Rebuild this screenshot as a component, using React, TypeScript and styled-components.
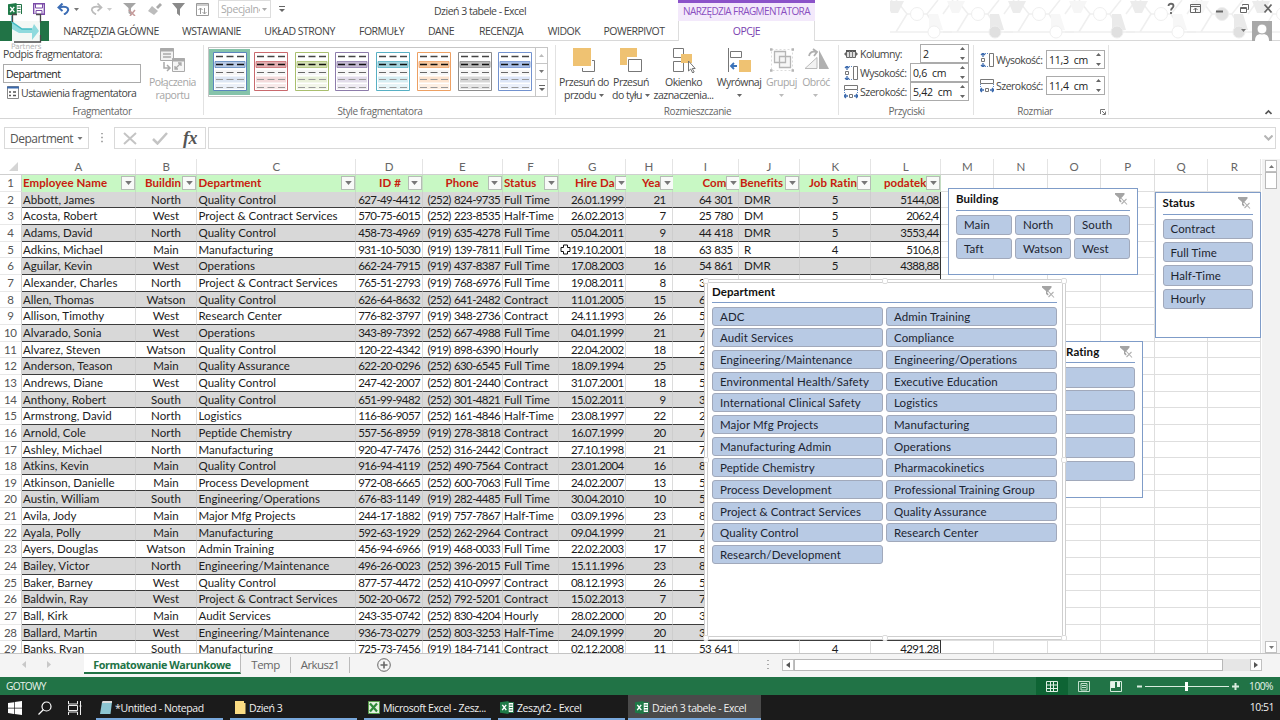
import type { ReactNode } from 'react'
import styled, { createGlobalStyle } from 'styled-components'

const GlobalStyle = createGlobalStyle`
  * {
    box-sizing: border-box;
  }

  body {
    margin: 0;
    overflow: hidden;
    background: #fff;
    color: #444;
    font: 10.5px 'Open Sans', 'Noto Sans', sans-serif;
    letter-spacing: -0.5px;
    white-space: nowrap;
  }

  svg {
    display: block;
    flex: none;
  }
`

const SHEET_FONT = "'Lato', 'Open Sans', sans-serif"

/* ---------- data ---------- */

const columns = [
  { id: 'A', width: 114.5, align: 'left', pad: 1.5 },
  { id: 'B', width: 61, align: 'center', pad: 0 },
  { id: 'C', width: 159, align: 'left', pad: 1.5 },
  { id: 'D', width: 66.5, align: 'right', pad: 1.5 },
  { id: 'E', width: 80, align: 'right', pad: 1.5 },
  { id: 'F', width: 56.5, align: 'left', pad: 1.5 },
  { id: 'G', width: 67, align: 'right', pad: 1.5 },
  { id: 'H', width: 46.5, align: 'right', pad: 6 },
  { id: 'I', width: 66, align: 'right', pad: 5 },
  { id: 'J', width: 61.5, align: 'left', pad: 5.5 },
  { id: 'K', width: 71, align: 'center', pad: 0 },
  { id: 'L', width: 70, align: 'right', pad: 1.5 },
  { id: 'M', width: 53.4, align: 'left', pad: 0 },
  { id: 'N', width: 53.4, align: 'left', pad: 0 },
  { id: 'O', width: 53.4, align: 'left', pad: 0 },
  { id: 'P', width: 53.4, align: 'left', pad: 0 },
  { id: 'Q', width: 53.4, align: 'left', pad: 0 },
  { id: 'R', width: 53.4, align: 'left', pad: 0 },
]

const headers = [
  { text: 'Employee Name', pad: 1.5 },
  { text: 'Buildin', pad: 9 },
  { text: 'Department', pad: 1.5 },
  { text: 'ID #', pad: 23 },
  { text: 'Phone', pad: 23 },
  { text: 'Status', pad: 1.5 },
  { text: 'Hire Da', pad: 16 },
  { text: 'Yea', pad: 16 },
  { text: 'Com', pad: 30 },
  { text: 'Benefits', pad: 1.5 },
  { text: 'Job Ratin', pad: 9 },
  { text: 'podatek', pad: 13 },
]

const employees = `Abbott, James|North|Quality Control|627-49-4412|(252) 824-9735|Full Time|26.01.1999|21|64 301|DMR|5|5144,08
Acosta, Robert|West|Project & Contract Services|570-75-6015|(252) 223-8535|Half-Time|26.02.2013|7|25 780|DM|5|2062,4
Adams, David|North|Quality Control|458-73-4969|(919) 635-4278|Full Time|05.04.2011|9|44 418|DMR|5|3553,44
Adkins, Michael|Main|Manufacturing|931-10-5030|(919) 139-7811|Full Time|19.10.2001|18|63 835|R|4|5106,8
Aguilar, Kevin|West|Operations|662-24-7915|(919) 437-8387|Full Time|17.08.2003|16|54 861|DMR|5|4388,88
Alexander, Charles|North|Project & Contract Services|765-51-2793|(919) 768-6976|Full Time|19.08.2011|8|37 612
Allen, Thomas|Watson|Quality Control|626-64-8632|(252) 641-2482|Contract|11.01.2005|15|63 206
Allison, Timothy|West|Research Center|776-82-3797|(919) 348-2736|Contract|24.11.1993|26|52 710
Alvarado, Sonia|West|Operations|343-89-7392|(252) 667-4988|Full Time|04.01.1999|21|72 480
Alvarez, Steven|Watson|Quality Control|120-22-4342|(919) 898-6390|Hourly|22.04.2002|18|22 316
Anderson, Teason|Main|Quality Assurance|622-20-0296|(252) 630-6545|Full Time|18.09.1994|25|57 110
Andrews, Diane|West|Quality Control|247-42-2007|(252) 801-2440|Contract|31.07.2001|18|54 230
Anthony, Robert|South|Quality Control|651-99-9482|(252) 301-4821|Full Time|15.02.2011|9|38 940
Armstrong, David|North|Logistics|116-86-9057|(252) 161-4846|Half-Time|23.08.1997|22|24 815
Arnold, Cole|North|Peptide Chemistry|557-56-8959|(919) 278-3818|Contract|16.07.1999|20|71 190
Ashley, Michael|North|Manufacturing|920-47-7476|(252) 316-2442|Contract|27.10.1998|21|73 072
Atkins, Kevin|Main|Quality Control|916-94-4119|(252) 490-7564|Contract|23.01.2004|16|82 500
Atkinson, Danielle|Main|Process Development|972-08-6665|(252) 600-7063|Full Time|24.02.2007|13|53 310
Austin, William|South|Engineering/Operations|676-83-1149|(919) 282-4485|Full Time|30.04.2010|10|52 940
Avila, Jody|Main|Major Mfg Projects|244-17-1882|(919) 757-7867|Half-Time|03.09.1996|23|86 240
Ayala, Polly|Main|Manufacturing|592-63-1929|(252) 262-2964|Contract|09.04.1999|21|71 680
Ayers, Douglas|Watson|Admin Training|456-94-6966|(919) 468-0033|Full Time|22.02.2003|17|85 130
Bailey, Victor|North|Engineering/Maintenance|496-26-0023|(252) 396-2015|Full Time|15.11.1996|23|82 760
Baker, Barney|West|Quality Control|877-57-4472|(252) 410-0997|Contract|08.12.1993|26|52 490
Baldwin, Ray|West|Project & Contract Services|502-20-0672|(252) 792-5201|Contract|15.02.2013|7|74 530
Ball, Kirk|Main|Audit Services|243-35-0742|(252) 830-4204|Hourly|28.02.2000|20|35 320
Ballard, Martin|West|Engineering/Maintenance|936-73-0279|(252) 803-3253|Half-Time|24.09.1999|20|39 610
Banks, Ryan|South|Manufacturing|725-73-7456|(919) 184-7141|Contract|02.12.2008|11|53 641||4|4291,28`
  .split('\n')
  .map((line) => line.split('|'))

const departments = [
  'ADC',
  'Admin Training',
  'Audit Services',
  'Compliance',
  'Engineering/Maintenance',
  'Engineering/Operations',
  'Environmental Health/Safety',
  'Executive Education',
  'International Clinical Safety',
  'Logistics',
  'Major Mfg Projects',
  'Manufacturing',
  'Manufacturing Admin',
  'Operations',
  'Peptide Chemistry',
  'Pharmacokinetics',
  'Process Development',
  'Professional Training Group',
  'Project & Contract Services',
  'Quality Assurance',
  'Quality Control',
  'Research Center',
  'Research/Development',
]

const galleryColors = [
  ['#5b86bd', '#b9cbe6', '#dde6f3'],
  ['#c9696d', '#e3aeb1', '#f3dadb'],
  ['#a9bf6e', '#d5e0b5', '#e9f0da'],
  ['#8d7cab', '#c4b9d3', '#e2dcea'],
  ['#57b0c4', '#a5d4de', '#d6edf2'],
  ['#eda063', '#f7c9a0', '#fce4d0'],
  ['#8c8c8c', '#bdbdbd', '#d6d6d6'],
  ['#7292cf', '#a9c0ea', '#dce5f7'],
]

/* ---------- window chrome ---------- */

const Window = styled.div`
  width: 1280px;
  height: 720px;
  display: flex;
  flex-direction: column;
  overflow: hidden;
`

const TopArea = styled.header`
  height: 41px;
  position: relative;
  flex: none;
`

const Backdrop = styled.svg`
  position: absolute;
  right: 0;
  top: 0;
`

const TitleBar = styled.div`
  height: 21px;
  display: flex;
  align-items: center;
  position: relative;
`

const QuickAccess = styled.div`
  width: 400px;
  height: 18px;
  padding-left: 8px;
  align-self: flex-start;
  display: flex;
  align-items: center;
`

const Slot = styled.div<{ $w: number }>`
  width: ${({ $w }) => $w}px;
  flex: none;
`

const StyleCombo = styled.div`
  width: 53px;
  height: 18px;
  padding: 0 3px 0 2px;
  border: 1px solid #ddd;
  display: flex;
  align-items: center;
  justify-content: space-between;
  color: #aaa;
  letter-spacing: -0.4px;
`

const ComboText = styled.span`
  width: 39px;
  overflow: hidden;
`

const Title = styled.div`
  width: 278px;
  padding-left: 34px;
  color: #444;
`

const ContextTitle = styled.div`
  width: 137px;
  height: 21px;
  border-top: 3px solid #8b52c9;
  background: #f3e9fb;
  color: #8a4fc0;
  font-size: 10px;
  line-height: 16px;
  text-align: center;
  letter-spacing: -0.6px;
`

const WindowButtons = styled.div`
  margin-left: auto;
  padding: 0 7px 3px 0;
  display: flex;
  align-items: center;
`

const TabRow = styled.nav`
  height: 20px;
  display: flex;
  position: relative;
  border-bottom: 1px solid #d8d8d8;
`

const FileTab = styled.div`
  width: 49px;
  height: 20px;
  background: #217346;
`

const Tab = styled.div<{ $w: number }>`
  width: ${({ $w }) => $w}px;
  line-height: 20px;
  text-align: center;
  letter-spacing: -0.5px;
`

const ActiveTab = styled(Tab)`
  height: 20px;
  background: #fff;
  border: 1px solid #ddd;
  border-width: 0 1px;
  color: #7a3fb0;
`

const Account = styled.div`
  margin-left: auto;
  padding-right: 8px;
  display: flex;
  align-items: center;
  gap: 6px;
`

const Watermark = styled.div`
  position: absolute;
  left: 11px;
  top: 13px;
  z-index: 3;
  color: #b4b4b4;
  font: 7.5px/8px 'DejaVu Sans', sans-serif;
  letter-spacing: -0.1px;
`

/* ---------- ribbon ---------- */

const Ribbon = styled.section`
  height: 78px;
  flex: none;
  display: flex;
  border-bottom: 1px solid #d5d5d5;
`

const Group = styled.div<{ $w: number }>`
  width: ${({ $w }) => $w}px;
  height: 77px;
  padding-top: 6px;
  position: relative;
  display: flex;
  flex-direction: column;
  background: linear-gradient(#e2e2e2, #e2e2e2) right 4px / 1px 70px no-repeat;
`

const GroupBody = styled.div<{ $pad?: string }>`
  height: 58px;
  display: flex;
  padding: ${({ $pad = '0' }) => $pad};
`

const GroupLabel = styled.div<{ $shift?: number }>`
  height: 14px;
  padding: 1px ${({ $shift = 0 }) => $shift}px 0 0;
  display: flex;
  align-items: center;
  justify-content: center;
  color: #666;
  font-size: 10px;
  line-height: 13px;
  letter-spacing: -0.4px;
`

const Launcher = styled.svg`
  position: absolute;
  right: 3px;
  bottom: 3px;
`

const CaptionColumn = styled.div`
  width: 142px;
  padding-left: 3px;
  display: flex;
  flex-direction: column;
  letter-spacing: -0.52px;
`

const CaptionLabel = styled.div`
  height: 17px;
  line-height: 15px;
`

const Field = styled.div<{ $w: number }>`
  width: ${({ $w }) => $w}px;
  height: 19px;
  padding: 0 3px 0 2px;
  border: 1px solid #ababab;
  background: #fff;
  color: #222;
  display: flex;
  align-items: center;
  justify-content: space-between;
`

const SettingsLink = styled.div`
  height: 19px;
  padding-left: 4px;
  display: flex;
  align-items: center;
  gap: 2px;
`

const BigButton = styled.div<{ $w: number; $muted?: boolean }>`
  width: ${({ $w }) => $w}px;
  margin-top: 1px;
  display: flex;
  flex-direction: column;
  align-items: center;
  text-align: center;
  color: ${({ $muted }) => ($muted ? '#a6a6a6' : '#444')};
`

const BigIcon = styled.div`
  height: 25px;
`

const BigLabel = styled.div`
  margin-top: 2px;
`

const LabelLine = styled.div`
  height: 13.5px;
  display: flex;
  align-items: center;
  justify-content: center;
  gap: 3px;
`

const Gallery = styled.div`
  width: 340px;
  height: 50px;
  border: 1px solid #c6c6c6;
  display: flex;
`

const GalleryItem = styled.div<{ $selected: boolean }>`
  width: 41px;
  height: 46px;
  margin-top: 1px;
  padding: 3px 0 0 4px;
  background: ${({ $selected }) => ($selected ? '#85c3aa' : 'transparent')};
`

const GalleryScroll = styled.div`
  width: 12px;
  margin-left: auto;
  display: grid;
  grid-template-rows: repeat(3, 1fr);
  border-left: 1px solid #c6c6c6;
`

const ScrollCell = styled.div`
  display: grid;
  place-items: center;
  border-bottom: 1px solid #c6c6c6;

  &:last-child {
    border: 0;
  }
`

const FieldStack = styled.div<{ $gap: number }>`
  flex: 1;
  margin-top: -3px;
  display: flex;
  flex-direction: column;
  gap: ${({ $gap }) => $gap}px;
`

const FieldRow = styled.div`
  height: 19px;
  display: flex;
  align-items: center;
  gap: 2px;

  ${Field} {
    margin-left: auto;
    letter-spacing: -0.25px;
    word-spacing: 2.5px;
  }
`

/* ---------- formula bar ---------- */

const FormulaBar = styled.section`
  height: 40px;
  flex: none;
  padding: 8px 4px 0;
  display: flex;
  background: #fff;
`

const NameBox = styled.div`
  width: 85px;
  height: 22px;
  padding: 0 5px;
  border: 1px solid #d9d9d9;
  display: flex;
  align-items: center;
  justify-content: space-between;
  font-size: 12px;
  letter-spacing: -0.5px;
  color: #555;
`

const FormulaButtons = styled.div`
  width: 92px;
  height: 22px;
  margin-left: 25px;
  padding: 0 8px;
  border: 1px solid #d9d9d9;
  display: flex;
  align-items: center;
  justify-content: space-between;
`

const Fx = styled.span`
  color: #555;
  font: italic bold 18px/18px 'Liberation Serif', serif;
  letter-spacing: -0.5px;
`

const FormulaInput = styled.div`
  flex: 1;
  height: 22px;
  margin-left: 2px;
  padding-right: 2px;
  border: 1px solid #d9d9d9;
  display: flex;
  align-items: center;
  justify-content: flex-end;
`

const Dots = styled.div`
  width: 25px;
  margin-right: -25px;
  height: 22px;
  display: grid;
  place-items: center;
`

/* ---------- sheet ---------- */

const SheetArea = styled.main`
  height: 495px;
  flex: none;
  display: flex;
  position: relative;
  overflow: hidden;
  border-bottom: 1px solid #c4c4c4;
`

const Grid = styled.div`
  width: 1262px;
  height: 494px;
  overflow: hidden;
  font-family: ${SHEET_FONT};
`

const HeadRow = styled.div`
  height: 16px;
  display: flex;
  border-bottom: 1px solid #cfcfcf;
`

const Corner = styled.div`
  width: 21.5px;
  height: 15px;
  padding: 3px 0 0 9px;
  flex: none;
`

const ColumnHead = styled.div<{ $w: number }>`
  width: ${({ $w }) => $w}px;
  flex: none;
  border-right: 1px solid #e4e4e4;
  text-align: center;
  font: 11.5px/15px ${SHEET_FONT};
  color: #666;
`

const Row = styled.div`
  height: 16.67px;
  display: flex;
`

const RowHead = styled.div`
  width: 21.5px;
  flex: none;
  border-right: 1px solid #d0d0d0;
  border-bottom: 1px solid #e8e8e8;
  text-align: center;
  font-size: 11.5px;
  line-height: 16.4px;
  color: #555;
`

const Cell = styled.div<{
  $w: number
  $align: string
  $pad: number
  $shaded: boolean
  $last: boolean
  $digits: boolean
}>`
  width: ${({ $w }) => $w}px;
  padding: 0 ${({ $pad }) => $pad}px;
  flex: none;
  border-right: 1px solid
    ${({ $shaded, $last }) => ($last ? '#333' : $shaded ? '#cdcdcd' : '#dcdcdc')};
  border-bottom: 1px solid #3c3c3c;
  background: ${({ $shaded }) => ($shaded ? '#d8d8d8' : '#fff')};
  color: #1c1c1c;
  text-align: ${({ $align }) => $align};
  font-size: 11.5px;
  line-height: 16.4px;
  letter-spacing: ${({ $digits }) => ($digits ? -0.62 : 0.03)}px;
  word-spacing: ${({ $digits }) => ($digits ? 1 : 0)}px;
`

const EmptyCell = styled.div<{ $w: number }>`
  width: ${({ $w }) => $w}px;
  flex: none;
  border: 1px solid #dedede;
  border-width: 0 1px 1px 0;
`

const HeaderCell = styled.div<{ $w: number; $pad: number }>`
  width: ${({ $w }) => $w}px;
  padding-left: ${({ $pad }) => $pad}px;
  flex: none;
  display: flex;
  align-items: center;
  justify-content: space-between;
  border-right: 1px solid #c4dcc2;
  background: #c8f8c4;
  color: #c8200f;
  font-weight: 700;
  font-size: 11.5px;
  line-height: 16px;
  letter-spacing: 0.07px;
`

const FilterButton = styled.div`
  width: 14px;
  height: 14px;
  flex: none;
  display: grid;
  place-items: center;
  border: 1px solid #b5bdb5;
  background: #f8faf8;
`

const SideScroll = styled.div`
  flex: 1;
  display: flex;
  flex-direction: column;
  align-items: center;
  background: #f2f2f2;
  padding-top: 1px;
`

const ScrollButton = styled.div`
  width: 12px;
  height: 12px;
  flex: none;
  display: grid;
  place-items: center;
  border: 1px solid #c0c0c0;
  background: #fff;
`

const SideThumb = styled.div`
  width: 12px;
  height: 17px;
  margin-bottom: auto;
  border: 1px solid #b8b8b8;
  background: #fff;
`

/* floating slicer panels sit freely over the sheet */
const Slicer = styled.div<{ $x: number; $y: number; $w: number; $h: number; $selected?: boolean }>`
  position: absolute;
  left: ${({ $x }) => $x}px;
  top: ${({ $y }) => $y}px;
  width: ${({ $w }) => $w}px;
  height: ${({ $h }) => $h}px;
  padding: ${({ $selected }) => ($selected ? '0 5px 0 4px' : '0 7px')};
  background: #fff;
  border: ${({ $selected }) => ($selected ? '4px double #cfcfcf' : '1px solid #7f9cc8')};
  border-radius: ${({ $selected }) => ($selected ? 3 : 0)}px;
  font-family: ${SHEET_FONT};
`

const SlicerTitle = styled.div<{ $h: number }>`
  height: ${({ $h }) => $h}px;
  padding: 0 2px 1px 0;
  display: flex;
  align-items: center;
  justify-content: space-between;
  border-bottom: 1px solid #7f9cc8;
  color: #111;
  font-size: 11.5px;
  font-weight: 700;
  letter-spacing: 0.08px;
`

const SlicerItems = styled.div<{ $cols: number; $h: number; $pitch: number }>`
  margin-top: 4px;
  display: grid;
  grid-template-columns: repeat(${({ $cols }) => $cols}, 1fr);
  grid-auto-rows: ${({ $h }) => $h}px;
  gap: ${({ $pitch, $h }) => $pitch - $h}px 3px;
`

const SlicerItem = styled.div`
  padding-left: 7px;
  display: flex;
  align-items: center;
  border: 1px solid #a1a9bb;
  border-radius: 3px;
  background: #b8cae4;
  color: #1c2430;
  font-size: 11.5px;
  letter-spacing: 0.1px;
`

const Handle = styled.i<{ $x: number; $y: number }>`
  position: absolute;
  left: ${({ $x }) => $x}px;
  top: ${({ $y }) => $y}px;
  width: 6px;
  height: 6px;
  border: 1px solid #dcdcdc;
  border-radius: 2px;
  background: #fff;
`

const Cursor = styled.svg`
  position: absolute;
  left: 560px;
  top: 85px;
`

/* ---------- bottom bars ---------- */

const SheetTabs = styled.div`
  height: 23px;
  flex: none;
  padding-right: 18px;
  display: flex;
  background: #f4f4f4;
  color: #666;
`

const TabArrows = styled.div`
  width: 84px;
  padding: 7px 0 0 22px;
  display: flex;
  gap: 19px;
`

const SheetTab = styled.div<{ $w: number; $active?: boolean }>`
  width: ${({ $w }) => $w}px;
  height: ${({ $active }) => ($active ? 20 : 16)}px;
  margin-top: ${({ $active }) => ($active ? 0 : 3)}px;
  text-align: center;
  line-height: ${({ $active }) => ($active ? 21 : 15)}px;
  letter-spacing: ${({ $active }) => ($active ? -0.4 : -0.55)}px;
  background: ${({ $active }) => ($active ? '#fff' : 'none')};
  color: ${({ $active }) => ($active ? '#217346' : '#666')};
  font-weight: ${({ $active }) => ($active ? 700 : 400)};
  font-size: ${({ $active }) => ($active ? 10.8 : 11.5)}px;
  border: 0 solid #bbb;
  border-right-width: 1px;
  ${({ $active }) => $active && 'border-bottom: 2px solid #217346;'}
`

const AddTab = styled.div`
  padding: 4px 0 0 27px;
`

const SplitHandle = styled.div`
  width: 6px;
  margin-left: auto;
  padding: 6px 0 0 2px;
`

const HScroll = styled.div`
  width: 480px;
  height: 12px;
  margin: 5px 0 0 11px;
  display: flex;
  background: #e6e6e6;
`

const HThumb = styled.div`
  width: 429px;
  border: 1px solid #b8b8b8;
  background: #fff;
`

const StatusBar = styled.footer`
  height: 18px;
  flex: none;
  padding: 0 7px 0 6px;
  display: flex;
  align-items: center;
  justify-content: space-between;
  background: #217346;
  color: #e8f3ec;
  font-size: 10.2px;
  letter-spacing: -0.7px;
`

const ViewTools = styled.div`
  height: 18px;
  display: flex;
  align-items: center;
`

const ViewButton = styled.div<{ $active?: boolean }>`
  width: 32px;
  height: 18px;
  display: grid;
  place-items: center;
  background: ${({ $active }) => ($active ? '#0e6434' : 'none')};
`

const Zoom = styled.div`
  width: 33px;
  text-align: right;
  letter-spacing: -0.5px;
`

const TaskBar = styled.div`
  height: 25px;
  flex: none;
  display: flex;
  background: #1b1b1b;
  color: #f0f0f0;
`

const SystemButtons = styled.div`
  width: 96px;
  padding: 0 14px 0 8px;
  display: flex;
  align-items: center;
  justify-content: space-between;
`

const Task = styled.div<{ $w: number; $pad?: number; $active?: boolean }>`
  width: ${({ $w }) => $w}px;
  height: 25px;
  margin-right: 7px;
  padding: 2px 0 0 ${({ $pad = 4 }) => $pad}px;
  display: flex;
  align-items: center;
  gap: 3px;
  letter-spacing: -0.4px;
  border-bottom: 2px solid #78a8dc;
  background: ${({ $active }) => ($active ? '#4a4a4a' : 'none')};

  &:nth-last-child(3) {
    margin-right: 3px;
  }
`

const Clock = styled.div`
  margin-left: auto;
  padding-right: 6px;
  line-height: 25px;
`

/* ---------- icons ---------- */

const Caret = ({ color = '#777', size = 5 }: { color?: string; size?: number }) => (
  <svg width={size} height={size > 6 ? 4 : 3} viewBox="0 0 5 3">
    <path d="M0 0h5L2.5 3z" fill={color} />
  </svg>
)

const Spinner = () => (
  <svg width="5" height="13" viewBox="0 0 5 13" fill="#666">
    <path d="M0 3h5L2.500 0zM0 10h5l-2.500 3z" />
  </svg>
)

const ExcelIcon = () => (
  <svg width="14" height="13" viewBox="0 0 14 13">
    <path d="M8 1.500h5.500v10H8z" fill="#fff" stroke="#217346" />
    <path d="M9.500 4h3M9.500 6.500h3M9.500 9h3" stroke="#217346" strokeWidth="1.200" />
    <path d="M0 1.300L8.500 0v13L0 11.700z" fill="#1e7a47" />
    <path d="M2.300 3.800l4 5.400M6.200 3.800l-4 5.400" stroke="#fff" strokeWidth="1.400" />
  </svg>
)

const ClearFilter = () => (
  <svg width="13" height="13" viewBox="0 0 13 13">
    <path d="M0 1h9.500v1.500L6.500 6v5L4 9V6L0 2.500z" fill="#a4a4a4" />
    <path d="M6 6.500l6 6M11.500 7l-5 5" stroke="#fff" strokeWidth="2.600" />
    <path d="M6 6l6 6.500M11.500 7l-5 5" stroke="#b0b0b0" strokeWidth="1.100" />
  </svg>
)

const FunnelIcon = () => (
  <svg width="13" height="13" viewBox="0 0 13 13">
    <path d="M0 0h13L8 6v7L5 10.500V6z" fill="#8a8a8a" />
  </svg>
)

const StylePreview = ({ colors }: { colors: string[] }) => {
  const [line, strong, soft] = colors
  return (
    <svg width="34" height="39" viewBox="0 0 34 39">
      <path d="M.5.5h33v38H.5z" fill="#fff" stroke={line} />
      <path d="M2 9.500h30v6H2z" fill={strong} stroke={line} strokeWidth=".8" />
      <path d="M2 18h30v5H2z" fill="#f6f6f6" />
      <path d="M2 24.500h30v6H2z" fill={soft} />
      <path d="M2 32h30v5H2z" fill={soft} opacity=".6" />
      <path d="M3 4.500h28" stroke="#444" strokeWidth="1.300" strokeDasharray="7 3.500" />
      <path d="M3 12.500h28" stroke="#111" strokeWidth="1.500" strokeDasharray="7 3.500" />
      <path d="M3 20.500h28" stroke="#666" strokeDasharray="7 3.500" />
      <path d="M3 27.500h28M3 35.500h28" stroke="#999" strokeDasharray="7 3.500" />
    </svg>
  )
}

const HeightIcon = () => (
  <svg width="14" height="14" viewBox="0 0 14 14" fill="none">
    <path d="M3 0v4M1 2l2-2 2 2M3 14v-4M1 12l2 2 2-2" stroke="#3a69ad" strokeWidth="1.300" />
    <path d="M1.500 5.500h3v3h-3z" stroke="#777" />
    <path d="M5 .5h4M5 13.500h4" stroke="#5a86c4" strokeDasharray="1 1" />
    <path d="M9.500.5h4v13h-4z" stroke="#777" fill="#fff" />
  </svg>
)

const WidthIcon = () => (
  <svg width="14" height="14" viewBox="0 0 14 14" fill="none">
    <path d="M.5.5h13v4H.5z" stroke="#777" fill="#fff" />
    <path d="M.5 5v4M13.500 5v4" stroke="#5a86c4" strokeDasharray="1 1" />
    <path d="M0 11h4M2 9l-2 2 2 2M14 11h-4M12 9l2 2-2 2" stroke="#3a69ad" strokeWidth="1.300" />
    <path d="M5.500 9.500h3v3h-3z" stroke="#777" />
  </svg>
)

const ColumnsIcon = () => (
  <svg width="14" height="10" viewBox="0 0 14 10" fill="none">
    <path d="M2.500 1.500h9v7h-9z" stroke="#666" fill="#ddd" />
    <path d="M2 2h10" stroke="#555" strokeWidth="2" />
    <path d="M5.500 2v7M8.500 2v7" stroke="#777" />
    <path d="M2 3L0 5l2 2zM12 3l2 2-2 2z" fill="#666" />
  </svg>
)

const ForwardIcon = () => (
  <svg width="24" height="24" viewBox="0 0 24 24">
    <path d="M10.500 12.500h12v11h-12z" fill="#fff" stroke="#777" />
    <path d="M0 0h20v20H0z" fill="#fff" />
    <path d="M1 0h18v18H1z" fill="#efc272" />
  </svg>
)

const BackwardIcon = () => (
  <svg width="24" height="24" viewBox="0 0 24 24">
    <path d="M1 0h17v17H1z" fill="#efc272" />
    <path d="M8 9h15v15H8z" fill="#fff" />
    <path d="M9.500 11.500h13v12h-13z" fill="#fff" stroke="#777" />
  </svg>
)

const PaneIcon = () => (
  <svg width="24" height="25" viewBox="0 0 24 25">
    <path d="M1.500.5h10v9h-10zM1.500 13.500h10v10h-10z" fill="#fff" stroke="#777" />
    <path d="M9 6h11v9H9z" fill="#efc272" />
    <path d="M16.500 13v10l2.200-2 2 4 1.500-1-2-3.500h3z" fill="#fff" stroke="#666" strokeWidth=".9" />
  </svg>
)

const AlignIcon = () => (
  <svg width="24" height="24" viewBox="0 0 24 24">
    <path d="M1.500 0v24" stroke="#777" />
    <path d="M3.500 3.500h11v6h-11z" fill="#fff" stroke="#777" />
    <path d="M12 12h12v12H12z" fill="#efc272" />
    <path d="M10 18H4M7 15l-3 3 3 3" fill="none" stroke="#3a72b8" strokeWidth="1.800" />
  </svg>
)

const GroupIcon = () => (
  <svg width="24" height="24" viewBox="0 0 24 24" fill="none" stroke="#b5b5b5">
    <path d="M1.500 1.500h21v21h-21z" strokeDasharray="2 2" stroke="#dcdcdc" />
    <path d="M4.500 3.500h11v11h-11zM9.500 8.500h11v11h-11z" fill="#eee" fillOpacity=".5" strokeWidth="1.300" />
    <path d="M0 1.500h2.500M21.500 1.500H24M0 22.500h2.500M21.500 22.500H24" strokeWidth="2.500" />
  </svg>
)

const RotateIcon = () => (
  <svg width="25" height="22" viewBox="0 0 25 22">
    <path d="M1 20.500h12v-11z" fill="#f3f3f3" stroke="#bbb" />
    <path d="M15 2v19h10z" fill="#b0b0b0" />
    <path d="M5 8c1-4 3-5 7-4M9 1l4 3-3 4" fill="none" stroke="#b0b0b0" strokeWidth="1.800" />
  </svg>
)

const ReportIcon = () => (
  <svg width="25" height="25" viewBox="0 0 25 25" fill="none" stroke="#aaa">
    <path d="M.5.5h13v12H.5z" fill="#f2f2f2" />
    <path d="M0 2h14" strokeWidth="3" />
    <path d="M3 6h8M3 9h8" strokeWidth="1.500" />
    <path d="M12.500 10.500h12v13h-12z" fill="#f6f6f6" />
    <path d="M12 12h13" strokeWidth="3" />
    <path d="M15 21l6-6M18 15h3v3M15 18v3h3" strokeWidth="1.300" />
    <path d="M4 14v6h6M7 17l3 3-3 3" strokeWidth="1.500" />
  </svg>
)

const Hexes = () => (
  <Backdrop width="390" height="40" viewBox="0 0 390 40" fill="none" stroke="#efefef">
    {[0, 1, 2, 3, 4, 5, 6].map((i) => (
      <g key={i} transform={`translate(${i * 61 - 8} 0)`}>
        <path d="M0 14L10 0M14 0l11 14h20l11-14M25 14L14 32H0M45 14l11 18h14M14 32h42" strokeWidth="1.500" />
        <path d="M47 14h9l5 16-14 1z" fill={i % 2 ? '#eaeaea' : '#f7f7f7'} stroke="none" />
        <path d="M4 1h18l-6 12H9z" fill={i % 2 ? '#f6f6f6' : '#ececec'} stroke="none" />
        <circle cx="35" cy="14" r="6.500" fill={i === 5 ? '#e2e2e2' : '#fff'} />
        <circle cx="52" cy="32" r="6" fill={i % 2 ? '#e0e0e0' : '#fff'} />
      </g>
    ))}
  </Backdrop>
)

const WindowIcons = () => (
  <svg width="106" height="14" viewBox="0 0 106 14" fill="none" stroke="#666">
    <path d="M1.500 4c0-3 5-3 5 0 0 2-2.500 2-2.500 4.500M4 10v2" strokeWidth="1.800" />
    <path d="M23.500 2.500h10v8h-10zM23.500 4.500h10M28.500 10V6M26.500 8l2-2 2 2" />
    <path d="M49 9.500h7" strokeWidth="2" />
    <path d="M75.500 3.500v-1h6v5h-1M73.500 5.500h6v5h-6zM73.500 6.500h6" />
    <path d="M97.500 2.500l7 8M104.500 2.500l-7 8" strokeWidth="1.800" />
  </svg>
)

/* ---------- pieces ---------- */

type BigProps = {
  w: number
  icon: ReactNode
  lines: string[]
  caret?: boolean
  muted?: boolean
}

const Big = ({ w, icon, lines, caret, muted }: BigProps) => (
  <BigButton $w={w} $muted={muted}>
    <BigIcon>{icon}</BigIcon>
    <BigLabel>
      {lines.map((line, i) => (
        <LabelLine key={line + i}>
          {line}
          {caret && i === lines.length - 1 && <Caret color={muted ? '#bbb' : '#666'} />}
        </LabelLine>
      ))}
    </BigLabel>
  </BigButton>
)

type PanelProps = {
  title: string
  x: number
  y: number
  w: number
  h: number
  cols: number
  itemHeight: number
  pitch: number
  items: string[]
  selected?: boolean
  children?: ReactNode
}

const SlicerPanel = ({ title, x, y, w, h, cols, itemHeight, pitch, items, selected, children }: PanelProps) => (
  <Slicer $x={x} $y={y} $w={w} $h={h} $selected={selected}>
    <SlicerTitle $h={selected ? 20 : 21.5}>
      {title}
      <ClearFilter />
    </SlicerTitle>
    <SlicerItems $cols={cols} $h={itemHeight} $pitch={pitch}>
      {items.map((item, i) => (
        <SlicerItem key={i}>{item}</SlicerItem>
      ))}
    </SlicerItems>
    {children}
  </Slicer>
)

const App = () => {
  return (
    <Window>
      <GlobalStyle />
      <TopArea>
        <Hexes />
        <TitleBar>
          <QuickAccess>
            <Slot $w={25}>
              <ExcelIcon />
            </Slot>
            <Slot $w={24}>
              <svg width="12" height="12" viewBox="0 0 12 12">
                <path d="M.7.7h10.600v10.600H.7z" fill="#fff" stroke="#7b4ba8" strokeWidth="1.400" />
                <path d="M2.500 1v4h7V1M3 11V7.500h6V11" fill="none" stroke="#7b4ba8" />
              </svg>
            </Slot>
            <Slot $w={17}>
              <svg width="13" height="12" viewBox="0 0 13 12" fill="none" stroke="#3c6db5" strokeWidth="2">
                <path d="M2 4.500c6-2 10 0 9 3-.5 2-2.500 3-4 4M5.500.5L1.500 4.500l4 3.500" />
              </svg>
            </Slot>
            <Slot $w={16}>
              <Caret />
            </Slot>
            <Slot $w={17}>
              <svg width="13" height="12" viewBox="0 0 13 12" fill="none" stroke="#bbb" strokeWidth="1.700">
                <path d="M11 4.500c-6-2-10 0-9 3 .5 2 2.500 3 4 4M7.500.5l4 4-4 3.500" />
              </svg>
            </Slot>
            <Slot $w={16}>
              <Caret color="#ccc" />
            </Slot>
            <Slot $w={25}>
              <svg width="14" height="13" viewBox="0 0 14 13">
                <path d="M0 0h13L8 5v7L5.500 10V5z" fill="#a5a5a5" />
                <path d="M6 7l6 6M12 7l-5 6" stroke="#c59a9a" strokeWidth="1.500" />
              </svg>
            </Slot>
            <Slot $w={24}>
              <svg width="14" height="12" viewBox="0 0 14 12">
                <path d="M8 4l4-4 2 2-4 4z" fill="#aaa" />
                <path d="M4 3l6 5-4 4-6-4z" fill="#bcbcbc" />
              </svg>
            </Slot>
            <Slot $w={24}>
              <FunnelIcon />
            </Slot>
            <Slot $w={22}>
              <svg width="13" height="13" viewBox="0 0 13 13" fill="none" stroke="#999">
                <path d="M.5.5h12v12H.5zM0 2h13M4.500 11V5M2.500 7l2-2 2 2M8.500 5v6M6.500 9l2 2 2-2" />
              </svg>
            </Slot>
            <StyleCombo>
              <ComboText>Specjaln‹</ComboText>
              <Caret color="#aaa" />
            </StyleCombo>
            <Slot $w={8} />
            <svg width="6" height="6" viewBox="0 0 6 6">
              <path d="M0 .5h6" stroke="#666" />
              <path d="M0 3h6L3 6z" fill="#666" />
            </svg>
          </QuickAccess>
          <Title>Dzień 3 tabele - Excel</Title>
          <ContextTitle>NARZĘDZIA FRAGMENTATORA</ContextTitle>
          <WindowButtons>
            <WindowIcons />
          </WindowButtons>
        </TitleBar>
        <TabRow>
          <FileTab />
          <Tab $w={124}>NARZĘDZIA GŁÓWNE</Tab>
          <Tab $w={77}>WSTAWIANIE</Tab>
          <Tab $w={99}>UKŁAD STRONY</Tab>
          <Tab $w={65}>FORMUŁY</Tab>
          <Tab $w={54}>DANE</Tab>
          <Tab $w={66}>RECENZJA</Tab>
          <Tab $w={60}>WIDOK</Tab>
          <Tab $w={80}>POWERPIVOT</Tab>
          <Slot $w={4} />
          <ActiveTab $w={137}>OPCJE</ActiveTab>
          <Account>
            <Caret />
            <svg width="20" height="20" viewBox="0 0 20 20">
              <path d="M0 0h20v20H0z" fill="#a8a8a8" />
              <path d="M3 20c0-6 3-7 7-7s7 1 7 7z" fill="#fff" />
              <circle cx="10" cy="8" r="5" fill="#fff" stroke="#a8a8a8" />
            </svg>
          </Account>
        </TabRow>
        <Watermark>
          <svg width="31" height="30" viewBox="0 0 31 30">
            <path d="M1 1h28v28H1z" fill="#fff" fillOpacity=".95" />
            <path d="M1 9v7l7 4h13v7l7-9-5-7-2 5H11z" fill="#8fdadd" />
            <path d="M1 3v6l10 7h10" fill="none" stroke="#45bcc4" strokeWidth="1.500" />
            <path d="M25 1.500h4.500v8M29.500 22v7H3M1.500 9V1.500H6" fill="none" stroke="#4a4a4a" strokeWidth="1.300" />
          </svg>
          Partners
        </Watermark>
      </TopArea>

      <Ribbon>
        <Group $w={204}>
          <GroupBody>
            <CaptionColumn>
              <CaptionLabel>Podpis fragmentatora:</CaptionLabel>
              <Field $w={138}>Department</Field>
              <SettingsLink>
                <svg width="12" height="13" viewBox="0 0 12 13" fill="none">
                  <path d="M.5.5h11v12H.5z" fill="#fff" stroke="#888" />
                  <path d="M0 1.500h12" stroke="#3a69ad" strokeWidth="2" />
                  <path d="M2 6h2M2 9.500h2M6 6h3M6 9.500h3" stroke="#555" strokeWidth="1.300" />
                </svg>
                Ustawienia fragmentatora
              </SettingsLink>
            </CaptionColumn>
            <Big w={61} icon={<ReportIcon />} lines={['Połączenia', 'raportu']} muted />
          </GroupBody>
          <GroupLabel>Fragmentator</GroupLabel>
        </Group>

        <Group $w={352}>
          <GroupBody $pad="0 0 0 4px">
            <Gallery>
              {galleryColors.map((colors, i) => (
                <GalleryItem key={i} $selected={i === 0}>
                  <StylePreview colors={colors} />
                </GalleryItem>
              ))}
              <GalleryScroll>
                <ScrollCell>
                  <svg width="5" height="3" viewBox="0 0 5 3">
                    <path d="M0 3h5L2.500 0z" fill="#bbb" />
                  </svg>
                </ScrollCell>
                <ScrollCell>
                  <Caret />
                </ScrollCell>
                <ScrollCell>
                  <svg width="6" height="6" viewBox="0 0 6 6">
                    <path d="M0 .5h6" stroke="#666" />
                    <path d="M0 3h6L3 6z" fill="#666" />
                  </svg>
                </ScrollCell>
              </GalleryScroll>
            </Gallery>
          </GroupBody>
          <GroupLabel>Style fragmentatora</GroupLabel>
        </Group>

        <Group $w={283}>
          <GroupBody $pad="0 0 0 2px">
            <Big w={52} icon={<ForwardIcon />} lines={['Przesuń do', 'przodu']} caret />
            <Big w={42} icon={<BackwardIcon />} lines={['Przesuń', 'do tyłu']} caret />
            <Big w={63} icon={<PaneIcon />} lines={['Okienko', 'zaznaczenia...']} />
            <Big w={48} icon={<AlignIcon />} lines={['Wyrównaj', '']} caret />
            <Big w={37} icon={<GroupIcon />} lines={['Grupuj', '']} caret muted />
            <Big w={32} icon={<RotateIcon />} lines={['Obróć', '']} caret muted />
          </GroupBody>
          <GroupLabel>Rozmieszczanie</GroupLabel>
        </Group>

        <Group $w={135}>
          <GroupBody $pad="0 5px 0 5px">
            <FieldStack $gap={0}>
              <FieldRow>
                <ColumnsIcon />
                Kolumny:
                <Field $w={49}>
                  2<Spinner />
                </Field>
              </FieldRow>
              <FieldRow>
                <HeightIcon />
                Wysokość:
                <Field $w={59}>
                  0,6 cm
                  <Spinner />
                </Field>
              </FieldRow>
              <FieldRow>
                <WidthIcon />
                Szerokość:
                <Field $w={59}>
                  5,42 cm
                  <Spinner />
                </Field>
              </FieldRow>
            </FieldStack>
          </GroupBody>
          <GroupLabel>Przyciski</GroupLabel>
        </Group>

        <Group $w={135}>
          <GroupBody $pad="6px 4px 0 6px">
            <FieldStack $gap={7}>
              <FieldRow>
                <HeightIcon />
                Wysokość:
                <Field $w={59}>
                  11,3 cm
                  <Spinner />
                </Field>
              </FieldRow>
              <FieldRow>
                <WidthIcon />
                Szerokość:
                <Field $w={59}>
                  11,4 cm
                  <Spinner />
                </Field>
              </FieldRow>
            </FieldStack>
          </GroupBody>
          <GroupLabel $shift={13}>Rozmiar</GroupLabel>
          <Launcher width="6" height="6" viewBox="0 0 6 6" fill="none" stroke="#777">
            <path d="M.5 5V.5H5M2 2l3 3M5.500 2.500v3h-3" />
          </Launcher>
        </Group>
        <Account>
          <svg width="7" height="72" viewBox="0 0 7 72" fill="none">
            <path d="M.5 70l3-3 3 3" stroke="#555" strokeWidth="1.700" />
          </svg>
        </Account>
      </Ribbon>

      <FormulaBar>
        <NameBox>
          Department
          <Caret size={6} />
        </NameBox>
        <Dots>
          <svg width="2" height="10" viewBox="0 0 2 10">
            <path d="M0 .5h2M0 4.500h2M0 8.500h2" stroke="#aaa" strokeWidth="1.500" />
          </svg>
        </Dots>
        <FormulaButtons>
          <svg width="14" height="13" viewBox="0 0 14 13">
            <path d="M1 1l12 11M13 1L1 12" stroke="#c4c4c4" strokeWidth="2" />
          </svg>
          <svg width="16" height="13" viewBox="0 0 16 13">
            <path d="M1 7l4.500 4.500L15 1" fill="none" stroke="#c4c4c4" strokeWidth="2.500" />
          </svg>
          <Fx>fx</Fx>
        </FormulaButtons>
        <FormulaInput>
          <svg width="9" height="6" viewBox="0 0 9 6">
            <path d="M.5.5l4 4 4-4" fill="none" stroke="#b5b5b5" strokeWidth="2" />
          </svg>
        </FormulaInput>
      </FormulaBar>

      <SheetArea>
        <Grid>
          <HeadRow>
            <Corner>
              <svg width="9" height="9" viewBox="0 0 9 9">
                <path d="M9 0v9H0z" fill="#d5d5d5" />
              </svg>
            </Corner>
            {columns.map((col) => (
              <ColumnHead key={col.id} $w={col.width}>
                {col.id}
              </ColumnHead>
            ))}
          </HeadRow>
          <Row>
            <RowHead>1</RowHead>
            {columns.map((col, i) =>
              headers[i] ? (
                <HeaderCell key={col.id} $w={col.width} $pad={headers[i].pad}>
                  {headers[i].text}
                  <FilterButton>
                    <Caret size={7} />
                  </FilterButton>
                </HeaderCell>
              ) : (
                <EmptyCell key={col.id} $w={col.width} />
              )
            )}
          </Row>
          {employees.map((employee, r) => (
            <Row key={r}>
              <RowHead>{r + 2}</RowHead>
              {columns.map((col, i) =>
                i < 12 ? (
                  <Cell
                    key={col.id}
                    $w={col.width}
                    $align={col.align}
                    $pad={col.pad}
                    $shaded={r % 2 === 0}
                    $last={i === 11}
                    $digits={col.align === 'right'}
                  >
                    {employee[i]}
                  </Cell>
                ) : (
                  <EmptyCell key={col.id} $w={col.width} />
                )
              )}
            </Row>
          ))}
        </Grid>
        <SideScroll>
          <ScrollButton>
            <svg width="5" height="3" viewBox="0 0 5 3">
              <path d="M0 3h5L2.500 0z" fill="#777" />
            </svg>
          </ScrollButton>
          <SideThumb />
          <ScrollButton>
            <Caret />
          </ScrollButton>
        </SideScroll>

        <SlicerPanel
          title="Building"
          x={948}
          y={29}
          w={190}
          h={87}
          cols={3}
          itemHeight={20.500}
          pitch={23.500}
          items={['Main', 'North', 'South', 'Taft', 'Watson', 'West']}
        />
        <SlicerPanel
          title="Status"
          x={1154.500}
          y={33}
          w={106}
          h={146}
          cols={1}
          itemHeight={20.500}
          pitch={23.400}
          items={['Contract', 'Full Time', 'Half-Time', 'Hourly']}
        />
        <SlicerPanel
          title="Job Rating"
          x={1037}
          y={181.500}
          w={106}
          h={157}
          cols={1}
          itemHeight={20.500}
          pitch={23.400}
          items={['', '', '', '', '']}
        />
        <SlicerPanel
          title="Department"
          x={704}
          y={119.500}
          w={362}
          h={361}
          cols={2}
          itemHeight={19}
          pitch={21.680}
          items={departments}
          selected
        >
          <Handle $x={-5} $y={-5} />
          <Handle $x={174} $y={-5} />
          <Handle $x={353} $y={-5} />
          <Handle $x={-5} $y={174} />
          <Handle $x={353} $y={174} />
          <Handle $x={-5} $y={352} />
          <Handle $x={174} $y={352} />
          <Handle $x={353} $y={352} />
        </SlicerPanel>

        <Cursor width="11" height="11" viewBox="0 0 11 11">
          <path d="M3.500 1h4v2.500H10v4H7.500V10h-4V7.500H1v-4h2.500z" fill="#fff" stroke="#111" />
        </Cursor>
      </SheetArea>

      <SheetTabs>
        <TabArrows>
          <svg width="5" height="7" viewBox="0 0 5 7">
            <path d="M4 0v7L0 3.500z" fill="#c8c8c8" />
          </svg>
          <svg width="5" height="7" viewBox="0 0 5 7">
            <path d="M1 0v7l4-3.500z" fill="#c8c8c8" />
          </svg>
        </TabArrows>
        <SheetTab $w={157} $active>
          Formatowanie Warunkowe
        </SheetTab>
        <SheetTab $w={50}>Temp</SheetTab>
        <SheetTab $w={59}>Arkusz1</SheetTab>
        <AddTab>
          <svg width="14" height="14" viewBox="0 0 14 14" fill="none" stroke="#666">
            <circle cx="7" cy="7" r="6.300" />
            <path d="M7 3.500v7M3.500 7h7" strokeWidth="1.600" />
          </svg>
        </AddTab>
        <SplitHandle>
          <svg width="2" height="10" viewBox="0 0 2 10">
            <path d="M0 .5h2M0 4.500h2M0 8.500h2" stroke="#aaa" />
          </svg>
        </SplitHandle>
        <HScroll>
          <ScrollButton>
            <svg width="4" height="6" viewBox="0 0 4 6">
              <path d="M4 0v6L0 3z" fill="#555" />
            </svg>
          </ScrollButton>
          <HThumb />
          <Slot $w={27} />
          <ScrollButton>
            <svg width="4" height="6" viewBox="0 0 4 6">
              <path d="M0 0v6l4-3z" fill="#555" />
            </svg>
          </ScrollButton>
        </HScroll>
      </SheetTabs>

      <StatusBar>
        GOTOWY
        <ViewTools>
          <ViewButton $active>
            <svg width="12" height="11" viewBox="0 0 12 11" fill="none" stroke="#e0efe5">
              <path d="M.5.5h11v10H.5zM4.500 0v11M7.500 0v11M0 4h12M0 7.500h12" />
            </svg>
          </ViewButton>
          <ViewButton>
            <svg width="12" height="11" viewBox="0 0 12 11" fill="none" stroke="#c3dfcd">
              <path d="M.5.5h11v10H.5zM3 2.500h6v6.500H3zM4 4.500h4M4 6.500h4" />
            </svg>
          </ViewButton>
          <ViewButton>
            <svg width="12" height="11" viewBox="0 0 12 11">
              <path d="M.5.5h11v10H.5z" fill="none" stroke="#d5eadc" />
              <path d="M1 1h4v6H1zM7 1h3v5H7z" fill="#e6f4eb" />
            </svg>
          </ViewButton>
          <Slot $w={4} />
          <svg width="104" height="11" viewBox="0 0 104 11" stroke="#d9ecdf">
            <path d="M1 5.500h5M96 5.500h7M99.500 2v7" strokeWidth="2" />
            <path d="M9 5.500h84" />
            <path d="M50.500 1v9" strokeWidth="3" stroke="#fff" />
          </svg>
          <Zoom>100%</Zoom>
        </ViewTools>
      </StatusBar>

      <TaskBar>
        <SystemButtons>
          <svg width="14" height="14" viewBox="0 0 14 14" fill="#fff">
            <path d="M0 2l6-.8v5.500H0zM6.700 1.100L14 0v6.700H6.700zM0 7.400h6v5.500L0 12zM6.700 7.400H14V14l-7.300-1z" />
          </svg>
          <svg width="14" height="14" viewBox="0 0 14 14" fill="none" stroke="#fff" strokeWidth="1.200">
            <circle cx="8.500" cy="5.500" r="4.500" />
            <path d="M5.500 8.500L.5 13.500" />
          </svg>
          <svg width="14" height="14" viewBox="0 0 14 14" fill="none" stroke="#eee">
            <path d="M.5 0v3h9V0M.5 14v-3h9v3M.5 4.500h9v5h-9zM12.500 0v14M11.500 5h2" />
          </svg>
        </SystemButtons>
        <Task $w={127}>
          <svg width="12" height="13" viewBox="0 0 12 13">
            <path d="M2 1h10l-1.500 12H0z" fill="#8cc5d2" />
            <path d="M2.500 0h9.500v2H2z" fill="#ddd" />
          </svg>
          *Untitled - Notepad
        </Task>
        <Task $w={127}>
          <svg width="12" height="13" viewBox="0 0 12 13">
            <path d="M1 0h9v2h1.500v11H1z" fill="#fbdc83" />
          </svg>
          Dzień 3
        </Task>
        <Task $w={127}>
          <svg width="12" height="13" viewBox="0 0 12 13">
            <path d="M.5.5h11v12H.5z" fill="#e4f2df" stroke="#5aa04c" />
            <path d="M2 2.500l7 8M9 2.500l-7 8" stroke="#2f8a3a" strokeWidth="2.200" />
          </svg>
          Microsoft Excel - Zesz...
        </Task>
        <Task $w={127} $pad={2}>
          <ExcelIcon />
          Zeszyt2 - Excel
        </Task>
        <Task $w={133} $pad={7} $active>
          <ExcelIcon />
          Dzień 3 tabele - Excel
        </Task>
        <Clock>10:51</Clock>
      </TaskBar>
    </Window>
  )
}

export default App
